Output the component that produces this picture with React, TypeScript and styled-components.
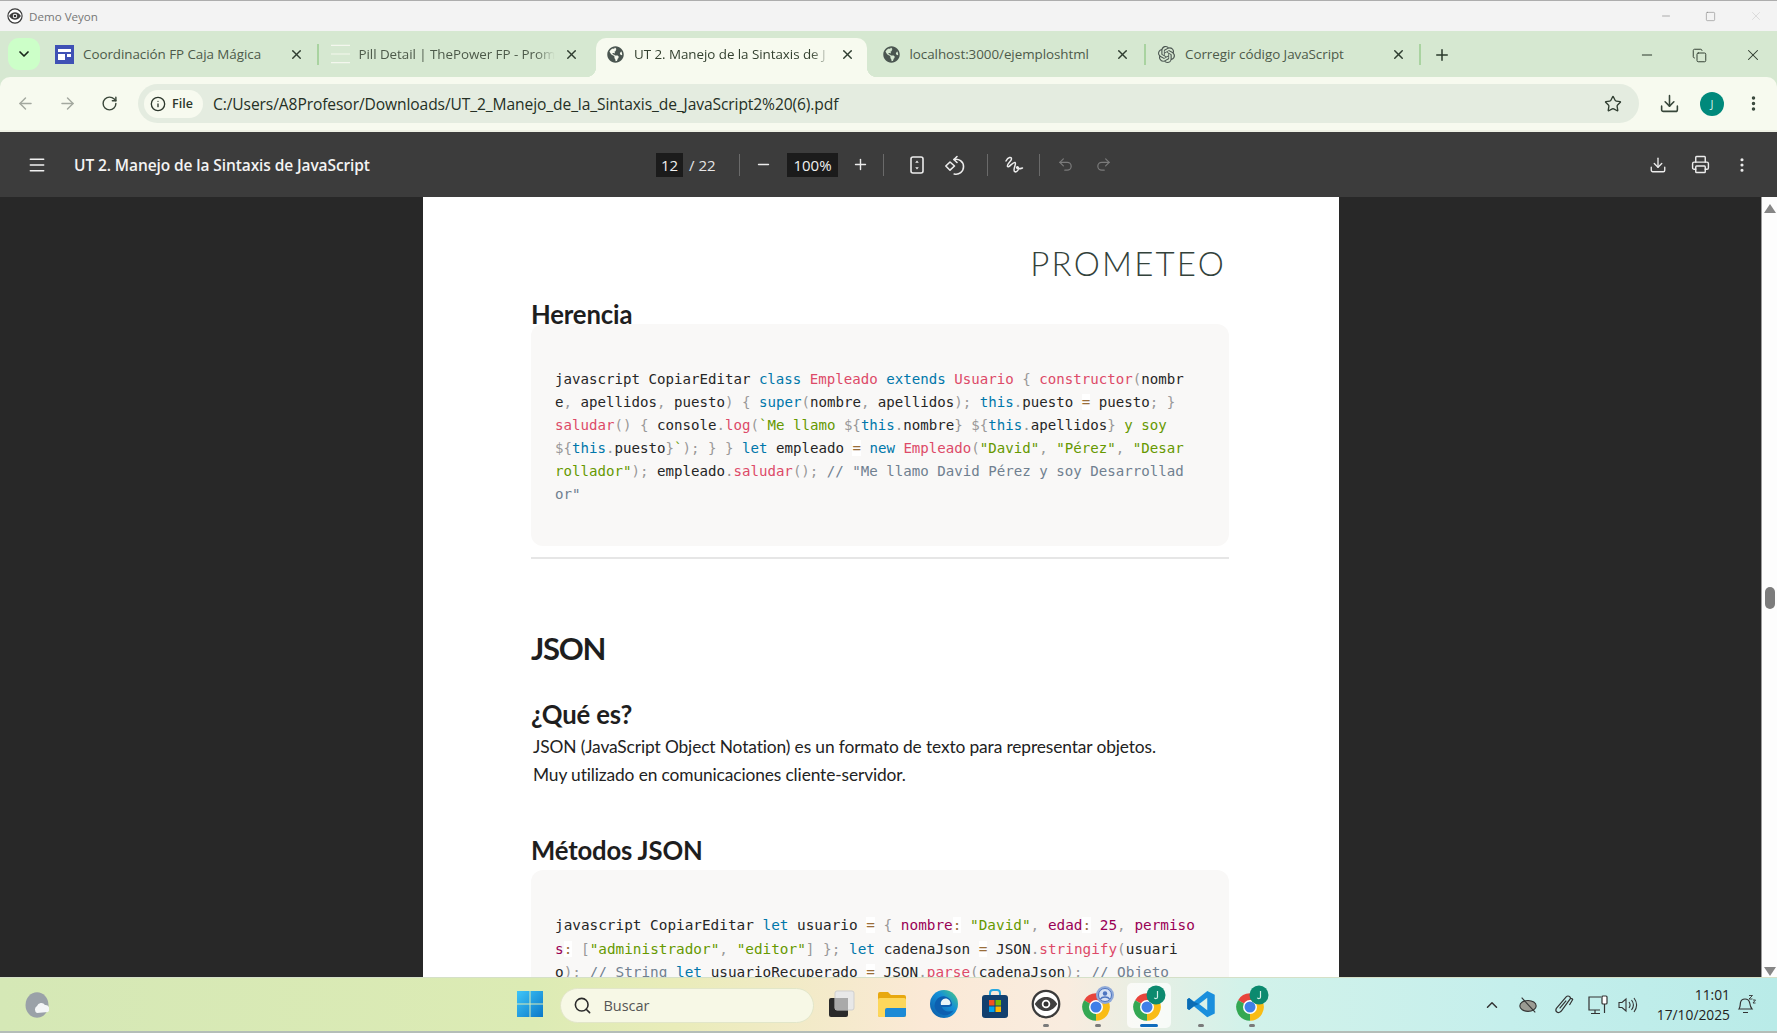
import React from "react";
import styled, { createGlobalStyle } from "styled-components";
import {
  ArrowLeft, ArrowRight, RotateCw, Info, Star, Download, EllipsisVertical, Menu, Minus, Plus,
  Undo2, Redo2, Printer, Search, ChevronUp, ChevronDown, X, Square, Copy,
} from "lucide-react";
import { FaGlobeAmericas } from "react-icons/fa";
import { SiOpenai } from "react-icons/si";

const Global = createGlobalStyle`
  html, body { margin: 0; padding: 0; height: 100%; overflow: hidden; }
  #root { height: 100%; }
  * { box-sizing: border-box; }
`;

const UI = `"Open Sans", "Noto Sans", sans-serif`;

const Shell = styled.div`
  height: 100vh; display: flex; flex-direction: column; overflow: hidden; font-family: ${UI};
`;

/* title bar */
const TitleBar = styled.div`
  height: 31px; flex: none; display: flex; align-items: center; background: #f3f3f3;
  border-top: 1px solid #adadad; padding: 0 0 0 7px; color: #777; font-size: 11.6px;
`;
const TitleText = styled.span`margin-left: 6px; flex: 1;`;
const TitleControls = styled.div`display: flex; align-items: center; gap: 33px; margin-right: 14px; color: #7d7d7d;`;
const FaintX = styled.span`color: #c9c9c9; display: flex;`;

/* tab strip */
const Strip = styled.div`
  height: 46px; flex: none; display: flex; align-items: flex-end; background: #d6e8d1; padding-left: 8px; position: relative;
`;
const TabMenu = styled.button`
  width: 32px; height: 32px; margin: 0 5px 7px 0; border: 0; padding: 0; border-radius: 11px; background: #ccffc8;
  display: flex; align-items: center; justify-content: center; color: #17261a;
`;
const Tab = styled.div<{ $active?: boolean }>`
  width: 271px; height: 39px; flex: none; display: flex; align-items: center; gap: 9px; padding: 0 12px 7px 10px; font-size: 13.4px;
  color: ${(p) => (p.$active ? "#33402f" : "#4d5a4a")};
  background: ${(p) => (p.$active ? "#f7faef" : "transparent")};
  border-radius: 10px 10px 0 0; position: relative;
  ${(p) =>
    p.$active
      ? `&::before, &::after { content: ""; position: absolute; bottom: 0; width: 10px; height: 10px; }
         &::before { left: -10px; background: radial-gradient(circle at 0 0, transparent 10px, #f7faef 10.5px); }
         &::after { right: -10px; background: radial-gradient(circle at 100% 0, transparent 10px, #f7faef 10.5px); }`
      : ""}
`;
const TabTitle = styled.span<{ $fade?: boolean }>`
  flex: 1; white-space: nowrap; overflow: hidden; letter-spacing: -0.05px;
  ${(p) => (p.$fade ? "-webkit-mask-image: linear-gradient(90deg,#000 90%,transparent 100%); mask-image: linear-gradient(90deg,#000 90%,transparent 100%);" : "")}
`;
const TabIconBox = styled.span`width: 19px; height: 19px; flex: none; display: flex; align-items: center; justify-content: center; color: #4a5550;`;
const TabClose = styled.span`width: 16px; height: 16px; flex: none; display: flex; align-items: center; justify-content: center; color: #2f3d30;`;
const TabSep = styled.span<{ $on?: boolean }>`
  width: 4.5px; height: 21px; flex: none; margin-bottom: 12px; display: flex; justify-content: center;
  &::before { content: ""; width: 2px; height: 100%; background: ${(p) => (p.$on ? "#a9d3a0" : "transparent")}; }
`;
const NewTab = styled.span`margin: 0 0 13px 10px; display: flex; color: #2a3a2b;`;
const WinControls = styled.div`
  margin-left: auto; margin-bottom: 13px; margin-right: 15px; display: flex; align-items: center; gap: 37px; color: #2c392c;
`;

/* toolbar */
const Toolbar = styled.div`
  height: 55px; flex: none; background: #d6e8d1;
`;
const ToolbarInner = styled.div`
  height: 53px; background: #f7faef; border-radius: 10px 10px 0 0; display: flex; align-items: center; padding: 0 0 0 15px;
  box-shadow: 0 2px 0 #eef1e5;
`;
const NavBtn = styled.span<{ $dim?: boolean }>`
  width: 20px; display: flex; justify-content: center; margin-right: 22px; color: ${(p) => (p.$dim ? "#a3a89f" : "#3a473a")};
`;
const Omni = styled.div`
  width: 1501px; margin-left: -3px; height: 39px; border-radius: 20px; background: #e4ece0; display: flex; align-items: center; padding: 0 17px 0 6px;
`;
const Chip = styled.div`
  height: 28px; width: 59px; border-radius: 14px; background: #f7faef; display: flex; align-items: center; gap: 6px; padding-left: 6px;
  font-size: 12.5px; font-weight: 600; color: #2c372c; flex: none;
`;
const Url = styled.span`flex: 1; margin-left: 10px; font-size: 15.6px; color: #253025; letter-spacing: -0.1px; white-space: nowrap;`;
const RightTools = styled.div`display: flex; align-items: center; margin-left: 20px; color: #37463a;`;
const Avatar = styled.span`
  width: 24px; height: 24px; border-radius: 50%; background: #00897b; color: #d8f0ea; font-size: 11px; display: flex; align-items: center; justify-content: center; margin: 0 20px 0 20px;
`;

/* pdf toolbar */
const PdfBar = styled.div`
  height: 65px; flex: none; background: #3c3c3c; display: flex; align-items: center; color: #f1f1f1; position: relative; padding-left: 27px;
`;
const PdfTitle = styled.span`
  font-size: 15.5px; font-weight: 600; color: #f3f3f3; width: 582px; margin-left: 27px; white-space: nowrap; letter-spacing: -0.1px;
`;
const PdfInput = styled.span<{ $w: number }>`
  width: ${(p) => p.$w}px; height: 24px; background: #1b1b1b; display: flex; align-items: center; justify-content: center; font-size: 15px; color: #f0f0f0; flex: none;
`;
const PageCount = styled.span`font-size: 15px; color: #e6e6e6; width: 56px; padding-left: 6px; flex: none;`;
const PdfSep = styled.span`width: 1px; height: 22px; background: #6a6a6a; flex: none;`;
const PdfIcon = styled.span<{ $w?: number; $dim?: boolean; $ml?: number; $mr?: number }>`
  width: ${(p) => p.$w ?? 47}px; margin: 0 ${(p) => p.$mr ?? 0}px 0 ${(p) => p.$ml ?? 0}px;
  display: flex; justify-content: center; flex: none; color: ${(p) => (p.$dim ? "#7b7b7b" : "#ececec")};
`;
const PdfRight = styled.div`margin-left: auto; display: flex; align-items: center; margin-right: 14px;`;

/* viewer */
const Viewer = styled.div`
  flex: 1; min-height: 0; display: flex; background: #282828; overflow: hidden;
`;
const Stage = styled.div`flex: 1; display: flex; justify-content: center; min-width: 0;`;
const Page = styled.div`
  width: 916px; margin-left: 1px; background: #fff; padding: 0 110px 0 108px; flex: none; height: 1200px;
  font-family: Lato, "Open Sans", sans-serif; color: #1f1f1f;
`;
const LogoRow = styled.div`display: flex; justify-content: flex-end; padding: 50px 5px 0 0; height: 88px;`;
const Logo = styled.span`
  font-family: Lato, sans-serif; font-weight: 300; font-size: 33px; line-height: 33px; letter-spacing: 2.2px; color: #33423b; margin-right: -2px;
`;
const H2 = styled.h2<{ $mt: number; $mb?: number }>`
  margin: ${(p) => p.$mt}px 0 ${(p) => p.$mb ?? 0}px; font-weight: 700; font-size: 25.7px; line-height: 34px; letter-spacing: -0.15px; color: #1e1e1e;
`;
const H1 = styled.h1`
  margin: 69px 0 0; font-weight: 700; font-size: 31px; line-height: 40px; letter-spacing: -1.3px; color: #1e1e1e;
`;
const Para = styled.p`
  margin: 2px 0 0 2px; font-size: 17.35px; line-height: 28px; letter-spacing: -0.12px; color: #222;
`;
const CodeBox = styled.div<{ $size: number; $pt: number; $pb: number; $lh: number }>`
  background: #f9f8f7; border-radius: 12px; padding: ${(p) => p.$pt}px 0 ${(p) => p.$pb}px 24px;
  font-family: "DejaVu Sans Mono", "Liberation Mono", monospace; font-size: ${(p) => p.$size}px; line-height: ${(p) => p.$lh}px; color: #262626;
`;
const CodeLine = styled.div`white-space: pre;`;
const colors: Record<string, string> = {
  k: "#0077aa", f: "#dd4a68", s: "#669900", p: "#999999", c: "#708090", r: "#990055", o: "#9a6e3a",
};
const Tok = styled.span<{ $k: string }>`
  color: ${(p) => colors[p.$k]};
  ${(p) => (p.$k === "o" ? "background: #fff;" : "")}
`;
const Rule = styled.hr`margin: 11px 0 0; border: 0; height: 2px; background: #e6e6e6;`;

/* scrollbar */
const Scroll = styled.div`
  width: 16px; flex: none; background: #fdfdfd; border-left: 1px solid #9c9c9c; display: flex; flex-direction: column; align-items: center; padding-top: 7px; position: relative;
`;
const ArrowUp = styled.span`width: 0; height: 0; border-left: 6px solid transparent; border-right: 6px solid transparent; border-bottom: 9px solid #868686;`;
const ArrowDown = styled.span`width: 0; height: 0; border-left: 6px solid transparent; border-right: 6px solid transparent; border-top: 9px solid #868686; margin-top: auto; margin-bottom: 1px;`;
const Thumb = styled.span`width: 10px; height: 22px; border-radius: 5px; background: #7c7c7c; margin-top: 374px;`;

/* taskbar */
const Taskbar = styled.div`
  height: 56px; flex: none; display: flex; align-items: center; padding: 2px 0 1px 25px; position: relative;
  background: linear-gradient(90deg, #d5e8b6 0%, #dcebb4 30%, #e9ecb9 38%, #fbe9d6 52%, #f9ecdf 60%, #d2f2ea 70%, #c5efec 85%, #b9ebe8 100%);
  border-top: 1px solid #d5e0c8; border-bottom: 2px solid #b4bdb8;
`;
const TaskGroup = styled.div`display: flex; align-items: center; gap: 7.4px; margin-left: 459px;`;
const Slot = styled.span<{ $active?: boolean }>`
  width: 44px; height: 45px; flex: none; display: flex; align-items: center; justify-content: center; position: relative; border-radius: 5px; padding-bottom: 2px;
  background: ${(p) => (p.$active ? "rgba(255,255,255,.72)" : "transparent")};
`;
const RunDot = styled.span<{ $active?: boolean }>`
  position: absolute; bottom: 1px; left: 50%; transform: translateX(-50%); height: 3px; border-radius: 2px;
  width: ${(p) => (p.$active ? 18 : 6)}px; background: ${(p) => (p.$active ? "#0f6cbd" : "#7a7a7a")};
`;
const SearchPill = styled.div`
  width: 254px; height: 35px; margin: 0 -3px 0 1px; flex: none; border-radius: 18px; background: #f7f8e6; border: 1px solid #e2e6c9; display: flex; align-items: center; gap: 11px; padding-left: 12px;
  font-size: 14.5px; color: #555;
`;
const Tray = styled.div`margin-left: auto; margin-right: 15px; display: flex; align-items: center; color: #333;`;
const TrayItem = styled.span<{ $w: number }>`width: ${(p) => p.$w}px; display: flex; justify-content: center; flex: none;`;
const Clock = styled.div`
  text-align: right; font-size: 13.8px; line-height: 20px; color: #222; margin-left: 9px; width: 81px; white-space: nowrap;
`;

/* drawn icons */
const VeyonEye = ({ s = 16 }: { s?: number }) => (
  <svg width={s} height={s} viewBox="0 0 24 24">
    <circle cx="12" cy="12" r="10.6" fill="#fff" stroke="#3b3b3b" strokeWidth="1.8" />
    <path d="M3 12c3-4.400 6-5.600 9-5.600s6 1.200 9 5.600c-3 4.400-6 5.600-9 5.600S6 16.400 3 12z" fill="#3f3f3f" />
    <circle cx="12" cy="12" r="3.400" fill="#fff" />
    <circle cx="12" cy="12" r="2" fill="#333" />
  </svg>
);
const FormsIcon = () => (
  <svg width="19" height="19" viewBox="0 0 19 19">
    <rect width="19" height="19" fill="#3f51b5" />
    <rect x="3" y="4" width="13" height="3" fill="#fff" />
    <rect x="3" y="9" width="7" height="6" fill="#fff" />
    <rect x="12" y="9" width="4" height="3" fill="#fff" />
  </svg>
);
const LinesIcon = () => (
  <svg width="20" height="20" viewBox="0 0 20 20" stroke="#f4f7ee" strokeWidth="1.3">
    <path d="M0 1h20M0 10h20M0 19h20" />
  </svg>
);
const FitIcon = () => (
  <svg width="20" height="20" viewBox="0 0 20 20" fill="none" stroke="#ececec" strokeWidth="1.6">
    <rect x="4" y="2" width="12" height="16" rx="2" />
    <path d="M10 5.500l-1.800 2.300h3.600zM10 14.500l-1.800-2.300h3.600z" fill="#ececec" stroke="none" />
  </svg>
);
const RotateIcon = () => (
  <svg width="22" height="22" viewBox="0 0 22 22" fill="none" stroke="#ececec" strokeWidth="1.6" strokeLinecap="round" strokeLinejoin="round">
    <path d="M6 8l4.500 4-4.500 4.200L1.800 12z" />
    <path d="M10 5.500a7.500 7.500 0 1 1 .2 14.500" />
    <path d="M13 2.500l-3 3 3 3" />
  </svg>
);
const InkIcon = () => (
  <svg width="22" height="22" viewBox="0 0 22 22" fill="none" stroke="#ececec" strokeWidth="1.5" strokeLinecap="round" strokeLinejoin="round">
    <path d="M3 7C5 3 8.500 2.500 8.500 5 8.500 7 3.500 10 4.500 12.500 5.500 14.500 10 7.500 12 8.500 14 9.500 9.500 15 11.500 17.500 13.500 19 17 14.500 15 13 13 12 12.500 16.500 19.500 14" />
  </svg>
);
const Chrome = ({ s = 32 }: { s?: number }) => (
  <svg width={s} height={s} viewBox="0 0 24 24">
    <path d="M12 12L2.470 6.500A11 11 0 0 1 21.530 6.500z" fill="#e8453c" />
    <path d="M12 12L21.530 6.500A11 11 0 0 1 12 23z" fill="#f9bc15" />
    <path d="M12 12L12 23A11 11 0 0 1 2.470 6.500z" fill="#34a853" />
    <circle cx="12" cy="12" r="5.600" fill="#fff" />
    <circle cx="12" cy="12" r="4.400" fill="#3f7fe8" />
  </svg>
);
const ChromeBadge = ({ people }: { people?: boolean }) => (
  <svg width="40" height="38" viewBox="0 0 40 38">
    <g transform="translate(3 7)"><Chrome s={30} /></g>
    {people ? (
      <g>
        <circle cx="27" cy="10" r="9" fill="#8fa9d8" />
        <circle cx="27" cy="10" r="6.500" fill="#d7e2f4" stroke="#4d74c0" strokeWidth="1" />
        <circle cx="27" cy="8.500" r="2.200" fill="#4d74c0" />
        <path d="M22.500 14c1.500-2.600 7.500-2.600 9 0" stroke="#4d74c0" strokeWidth="1.500" fill="none" />
      </g>
    ) : (
      <g>
        <circle cx="27" cy="10" r="9.500" fill="#0c8a6f" />
        <path d="M28.500 6v6c0 1.800-2.500 2-3.200 .8" stroke="#d6efe8" strokeWidth="1.200" fill="none" />
      </g>
    )}
  </svg>
);
const WinLogo = () => (
  <svg width="28" height="28" viewBox="0 0 28 28">
    <defs>
      <linearGradient id="wl" x1="0" y1="0" x2="1" y2="1"><stop offset="0" stopColor="#3fc6f8" /><stop offset="1" stopColor="#0a78c8" /></linearGradient>
    </defs>
    <path d="M1 1h12.500v12.500H1zM14.500 1H27v12.500H14.500zM1 14.500h12.500V27H1zM14.500 14.500H27V27H14.500z" fill="url(#wl)" />
  </svg>
);
const TaskView = () => (
  <svg width="28" height="28" viewBox="0 0 28 28">
    <rect x="2" y="8" width="19" height="19" rx="2" fill="#2a2a2a" />
    <rect x="8" y="1" width="19" height="19" rx="2" fill="#e8e8e8" stroke="#cfcfcf" />
    <rect x="8" y="8" width="13" height="12" fill="#a9a9a9" />
  </svg>
);
const Folder = () => (
  <svg width="30" height="28" viewBox="0 0 30 28">
    <path d="M1 4a2 2 0 0 1 2-2h8l3 3h13a2 2 0 0 1 2 2v18a2 2 0 0 1-2 2H3a2 2 0 0 1-2-2z" fill="#e8a80f" />
    <rect x="1" y="8" width="28" height="19" rx="2" fill="#fdd75b" />
    <path d="M8 27v-7a2 2 0 0 1 2-2h19v7a2 2 0 0 1-2 2z" fill="#1c8ad6" />
  </svg>
);
const Edge = () => (
  <svg width="30" height="30" viewBox="0 0 30 30">
    <defs>
      <linearGradient id="eg" x1="0" y1="1" x2="1" y2="0"><stop offset="0" stopColor="#0c59a4" /><stop offset=".6" stopColor="#1590d8" /><stop offset="1" stopColor="#4fd07a" /></linearGradient>
    </defs>
    <circle cx="15" cy="15" r="14" fill="url(#eg)" />
    <path d="M5.500 17C6 10 11 6.500 16 7.500c4.500 1 7 4.500 7 8 0 2-2.500 2.500-5 2.500h-5c1 4 6 6 11.500 3.500-2.500 4-7 5.500-10.500 4.500C9 24.500 6 21 5.500 17z" fill="#0d5fb0" />
    <path d="M12 16c-1-3.500 1.500-6.500 4.500-6.500 3 0 5 2.500 5 5 0 1.200-1.500 1.500-3 1.500z" fill="#e8f4f8" />
  </svg>
);
const StoreBag = () => (
  <svg width="28" height="30" viewBox="0 0 28 30">
    <path d="M9 6V4a3 3 0 0 1 3-3h4a3 3 0 0 1 3 3v2" fill="none" stroke="#27a7e0" strokeWidth="2" />
    <rect x="1" y="6" width="26" height="23" rx="3" fill="#12406f" />
    <rect x="8" y="11" width="5.500" height="5.500" fill="#f25022" />
    <rect x="14.500" y="11" width="5.500" height="5.500" fill="#7fba00" />
    <rect x="8" y="17.500" width="5.500" height="5.500" fill="#00a4ef" />
    <rect x="14.500" y="17.500" width="5.500" height="5.500" fill="#ffb900" />
  </svg>
);
const VSCode = () => (
  <svg width="30" height="30" viewBox="0 0 24 24">
    <path fillRule="evenodd" d="M17 1.500L23 4.500V19.500L17 22.500L6.300 13.800L2.500 16.800L1 15.800V8.200L2.500 7.200L6.300 10.200ZM17 7L10.500 12L17 17Z" fill="#1a8fdd" />
    <path d="M6.300 10.200L2.500 7.200L1 8.200V15.800L2.500 16.800L6.300 13.800L10.500 12Z" fill="#0b6cb4" />
  </svg>
);
const Weather = () => (
  <svg width="24" height="26" viewBox="0 0 24 26">
    <ellipse cx="12" cy="13" rx="11.500" ry="12.800" fill="#9aa1a8" />
    <path d="M12 21a4 4 0 0 1 0-7 4.500 4.500 0 0 1 8-1 4 4 0 0 1 3 7z" fill="#f4f6f8" />
  </svg>
);
const CloudOff = () => (
  <svg width="20" height="20" viewBox="0 0 22 22" fill="#9b9b93" stroke="#333" strokeWidth="1.200">
    <ellipse cx="11" cy="12" rx="9" ry="6" />
    <path d="M4 3l15 16" />
  </svg>
);
const PenTray = () => (
  <svg width="24" height="24" viewBox="0 0 22 22" fill="none" stroke="#333" strokeWidth="1.100" strokeLinejoin="round">
    <path d="M4 14L13 3.500c1.500-1.500 4-.5 4 1.500L9 16c-1 1.500-3 2.500-4.500 1.500S3.500 15 4 14z" />
    <path d="M7 14l6-7M17 5c1 0 2 .5 2 1l-3 5" />
  </svg>
);
const MonitorTray = () => (
  <svg width="22" height="22" viewBox="0 0 22 22" fill="none" stroke="#333" strokeWidth="1.200">
    <path d="M14 3H2v13h11M8 16v3M4 19.500h9" />
    <rect x="15" y="2" width="5" height="8" rx="1" fill="#fff" />
    <path d="M17.500 10v9" />
  </svg>
);
const VolumeTray = () => (
  <svg width="22" height="22" viewBox="0 0 22 22" fill="none" stroke="#333" strokeWidth="1.100">
    <path d="M2 8.500h3l4-3.500v12l-4-3.500H2z" />
    <path d="M12 8c1.300 1.800 1.300 4.200 0 6M14.500 6c2.300 3 2.300 7 0 10M17 4c3.200 4.300 3.200 9.700 0 14" />
  </svg>
);
const BellTray = () => (
  <svg width="20" height="22" viewBox="0 0 20 22" fill="none" stroke="#333" strokeWidth="1.200">
    <path d="M3 15c1.500-2 1-4 1.500-6.500C5 6 7 5 9 5c2 0 4 1 4.600 3.500.4 2.500 1 4.800 2.400 6.500zM7 18.500h5" />
    <path d="M13 1.500h3.500L13 5h3.500M17 6h2.500L17 9h2.500" strokeWidth=".9" />
  </svg>
);

/* code tokens */
type T = [string, string];
const t = (s: string): T => ["", s];
const CodeRow = ({ items }: { items: T[] }) => (
  <CodeLine>
    {items.map(([k, s], i) => (k ? <Tok key={i} $k={k}>{s}</Tok> : <React.Fragment key={i}>{s}</React.Fragment>))}
  </CodeLine>
);

const code1: T[][] = [
  [t("javascript CopiarEditar "), ["k", "class"], t(" "), ["f", "Empleado"], t(" "), ["k", "extends"], t(" "), ["f", "Usuario"], t(" "), ["p", "{"], t(" "), ["f", "constructor"], ["p", "("], t("nombr")],
  [t("e"), ["p", ","], t(" apellidos"), ["p", ","], t(" puesto"), ["p", ")"], t(" "), ["p", "{"], t(" "), ["k", "super"], ["p", "("], t("nombre"), ["p", ","], t(" apellidos"), ["p", ")"], ["p", ";"], t(" "), ["k", "this"], ["p", "."], t("puesto "), ["o", "="], t(" puesto"), ["p", ";"], t(" "), ["p", "}"]],
  [["f", "saludar"], ["p", "()"], t(" "), ["p", "{"], t(" console"), ["p", "."], ["f", "log"], ["p", "("], ["s", "`Me llamo "], ["p", "${"], ["k", "this"], ["p", "."], t("nombre"), ["p", "}"], t(" "), ["p", "${"], ["k", "this"], ["p", "."], t("apellidos"), ["p", "}"], ["s", " y soy"]],
  [["p", "${"], ["k", "this"], ["p", "."], t("puesto"), ["p", "}"], ["s", "`"], ["p", ");"], t(" "), ["p", "}"], t(" "), ["p", "}"], t(" "), ["k", "let"], t(" empleado "), ["o", "="], t(" "), ["k", "new"], t(" "), ["f", "Empleado"], ["p", "("], ["s", '"David"'], ["p", ","], t(" "), ["s", '"Pérez"'], ["p", ","], t(" "), ["s", '"Desar']],
  [["s", 'rollador"'], ["p", ");"], t(" empleado"), ["p", "."], ["f", "saludar"], ["p", "();"], t(" "), ["c", '// "Me llamo David Pérez y soy Desarrollad']],
  [["c", 'or"']],
];
const code2: T[][] = [
  [t("javascript CopiarEditar "), ["k", "let"], t(" usuario "), ["o", "="], t(" "), ["p", "{"], t(" "), ["r", "nombre"], ["o", ":"], t(" "), ["s", '"David"'], ["p", ","], t(" "), ["r", "edad"], ["o", ":"], t(" "), ["r", "25"], ["p", ","], t(" "), ["r", "permiso"]],
  [["r", "s"], ["o", ":"], t(" "), ["p", "["], ["s", '"administrador"'], ["p", ","], t(" "), ["s", '"editor"'], ["p", "]"], t(" "), ["p", "};"], t(" "), ["k", "let"], t(" cadenaJson "), ["o", "="], t(" JSON"), ["p", "."], ["f", "stringify"], ["p", "("], t("usuari")],
  [t("o"), ["p", ");"], t(" "), ["c", "// String"], t(" "), ["k", "let"], t(" usuarioRecuperado "), ["o", "="], t(" JSON"), ["p", "."], ["f", "parse"], ["p", "("], t("cadenaJson"), ["p", ");"], t(" "), ["c", "// Objeto"]],
];

const tabs = [
  { title: "Coordinación FP Caja Mágica", icon: <FormsIcon />, sep: true },
  { title: "Pill Detail | ThePower FP - Prom", icon: <LinesIcon />, fade: true },
  { title: "UT 2. Manejo de la Sintaxis de J", icon: <FaGlobeAmericas size={17} />, active: true, fade: true },
  { title: "localhost:3000/ejemploshtml", icon: <FaGlobeAmericas size={17} />, sep: true },
  { title: "Corregir código JavaScript", icon: <SiOpenai size={17} />, sep: true },
];

export default function App() {
  return (
    <Shell>
      <Global />
      <TitleBar>
        <VeyonEye />
        <TitleText>Demo Veyon</TitleText>
        <TitleControls>
          <Minus size={12} strokeWidth={1.2} />
          <Square size={11} strokeWidth={1.2} />
          <FaintX><X size={14} strokeWidth={1} /></FaintX>
        </TitleControls>
      </TitleBar>

      <Strip>
        <TabMenu aria-label="Tabs"><ChevronDown size={16} strokeWidth={2.6} /></TabMenu>
        {tabs.map((tab) => (
          <React.Fragment key={tab.title}>
            <Tab $active={tab.active}>
              <TabIconBox>{tab.icon}</TabIconBox>
              <TabTitle $fade={tab.fade}>{tab.title}</TabTitle>
              <TabClose><X size={15} strokeWidth={2.3} /></TabClose>
            </Tab>
            <TabSep $on={tab.sep} />
          </React.Fragment>
        ))}
        <NewTab><Plus size={18} strokeWidth={2} /></NewTab>
        <WinControls>
          <Minus size={16} strokeWidth={1.5} />
          <Copy size={15} strokeWidth={1.5} />
          <X size={18} strokeWidth={1.4} />
        </WinControls>
      </Strip>

      <Toolbar>
        <ToolbarInner>
          <NavBtn $dim><ArrowLeft size={19} strokeWidth={1.8} /></NavBtn>
          <NavBtn $dim><ArrowRight size={19} strokeWidth={1.8} /></NavBtn>
          <NavBtn><RotateCw size={17} strokeWidth={2} /></NavBtn>
          <Omni>
            <Chip><Info size={16} strokeWidth={2} />File</Chip>
            <Url>C:/Users/A8Profesor/Downloads/UT_2_Manejo_de_la_Sintaxis_de_JavaScript2%20(6).pdf</Url>
            <Star size={18} strokeWidth={1.8} color="#2f3d30" />
          </Omni>
          <RightTools>
            <Download size={21} strokeWidth={1.8} />
            <Avatar>J</Avatar>
            <EllipsisVertical size={19} strokeWidth={2.4} />
          </RightTools>
        </ToolbarInner>
      </Toolbar>

      <PdfBar>
        <Menu size={20} strokeWidth={1.8} />
        <PdfTitle>UT 2. Manejo de la Sintaxis de JavaScript</PdfTitle>
        <PdfInput $w={27}>12</PdfInput>
        <PageCount>/ 22</PageCount>
        <PdfSep />
        <PdfIcon><Minus size={17} strokeWidth={2} /></PdfIcon>
        <PdfInput $w={51}>100%</PdfInput>
        <PdfIcon $w={45}><Plus size={17} strokeWidth={2} /></PdfIcon>
        <PdfSep />
        <PdfIcon $w={38} $ml={14}><FitIcon /></PdfIcon>
        <PdfIcon $w={38} $mr={13}><RotateIcon /></PdfIcon>
        <PdfSep />
        <PdfIcon $w={51}><InkIcon /></PdfIcon>
        <PdfSep />
        <PdfIcon $w={51} $dim><Undo2 size={17} strokeWidth={1.7} /></PdfIcon>
        <PdfIcon $w={24} $dim><Redo2 size={17} strokeWidth={1.7} /></PdfIcon>
        <PdfRight>
          <PdfIcon $w={42}><Download size={18} strokeWidth={1.8} /></PdfIcon>
          <PdfIcon $w={42}><Printer size={19} strokeWidth={1.8} /></PdfIcon>
          <PdfIcon $w={42}><EllipsisVertical size={18} strokeWidth={2.2} /></PdfIcon>
        </PdfRight>
      </PdfBar>

      <Viewer>
        <Stage>
          <Page>
            <LogoRow><Logo>PROMETEO</Logo></LogoRow>
            <H2 $mt={12} $mb={-7}>Herencia</H2>
            <CodeBox $size={14.12} $lh={23} $pt={44} $pb={40}>
              {code1.map((l, i) => <CodeRow key={i} items={l} />)}
            </CodeBox>
            <Rule />
            <H1>JSON</H1>
            <H2 $mt={29}>¿Qué es?</H2>
            <Para>JSON (JavaScript Object Notation) es un formato de texto para representar objetos.<br />Muy utilizado en comunicaciones cliente-servidor.</Para>
            <H2 $mt={44} $mb={3}>Métodos JSON</H2>
            <CodeBox $size={14.37} $lh={23.7} $pt={44} $pb={40}>
              {code2.map((l, i) => <CodeRow key={i} items={l} />)}
            </CodeBox>
          </Page>
        </Stage>
        <Scroll>
          <ArrowUp />
          <Thumb />
          <ArrowDown />
        </Scroll>
      </Viewer>

      <Taskbar>
        <Weather />
        <TaskGroup>
          <Slot><WinLogo /></Slot>
          <SearchPill><Search size={19} strokeWidth={2} color="#2b2b2b" />Buscar</SearchPill>
          <Slot><TaskView /></Slot>
          <Slot><Folder /></Slot>
          <Slot><Edge /></Slot>
          <Slot><StoreBag /></Slot>
          <Slot><VeyonEye s={30} /><RunDot /></Slot>
          <Slot><ChromeBadge people /><RunDot /></Slot>
          <Slot $active><ChromeBadge /><RunDot $active /></Slot>
          <Slot><VSCode /><RunDot /></Slot>
          <Slot><ChromeBadge /><RunDot /></Slot>
        </TaskGroup>
        <Tray>
          <TrayItem $w={34}><ChevronUp size={18} strokeWidth={2} /></TrayItem>
          <TrayItem $w={38}><CloudOff /></TrayItem>
          <TrayItem $w={33}><PenTray /></TrayItem>
          <TrayItem $w={36}><MonitorTray /></TrayItem>
          <TrayItem $w={24}><VolumeTray /></TrayItem>
          <Clock>11:01<br />17/10/2025</Clock>
          <TrayItem $w={32}><BellTray /></TrayItem>
        </Tray>
      </Taskbar>
    </Shell>
  );
}
